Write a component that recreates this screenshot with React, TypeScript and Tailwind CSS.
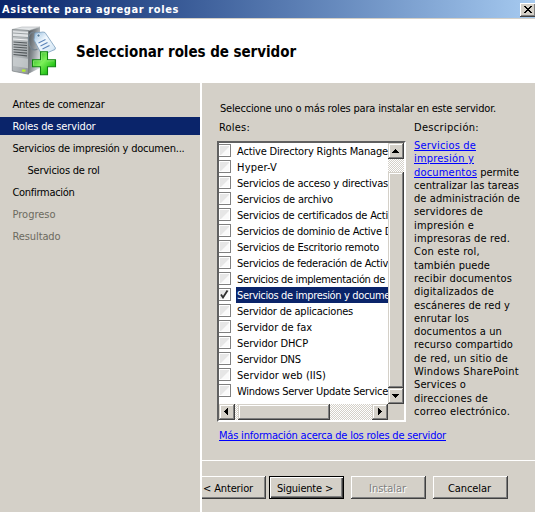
import { useLayoutEffect, useRef, useState } from 'react';

/* Single line of text tracked out to an exact width. */
function Fit({ text, w, className = '' }: { text: string; w: number; className?: string }) {
  const ref = useRef<HTMLSpanElement>(null);
  const [spacing, setSpacing] = useState(0);
  useLayoutEffect(() => {
    const el = ref.current;
    if (!el) return;
    el.style.letterSpacing = '0px';
    const s = (w - el.getBoundingClientRect().width) / text.length;
    el.style.letterSpacing = s + 'px';
    setSpacing(s);
  }, [text, w]);
  return (
    <span ref={ref} className={'inline-block shrink-0 translate-y-px whitespace-pre ' + className} style={{ letterSpacing: spacing }}>
      {text}
    </span>
  );
}

const steps = [
  { text: 'Antes de comenzar', w: 92 },
  { text: 'Roles de servidor', w: 83, active: true },
  { text: 'Servicios de impresión y documen...', w: 172 },
  { text: 'Servicios de rol', w: 72, indent: true },
  { text: 'Confirmación', w: 62 },
  { text: 'Progreso', w: 43, disabled: true },
  { text: 'Resultado', w: 48, disabled: true },
];

const roles = [
  { text: 'Active Directory Rights Manage', w: 151 },
  { text: 'Hyper-V', w: 40 },
  { text: 'Servicios de acceso y directivas', w: 151 },
  { text: 'Servicios de archivo', w: 96 },
  { text: 'Servicios de certificados de Acti', w: 151 },
  { text: 'Servicios de dominio de Active D', w: 155 },
  { text: 'Servicios de Escritorio remoto', w: 142 },
  { text: 'Servicios de federación de Activ', w: 151 },
  { text: 'Servicios de implementación de', w: 148 },
  { text: 'Servicios de impresión y docume', w: 153, checked: true },
  { text: 'Servidor de aplicaciones', w: 116 },
  { text: 'Servidor de fax', w: 75 },
  { text: 'Servidor DHCP', w: 71 },
  { text: 'Servidor DNS', w: 64 },
  { text: 'Servidor web (IIS)', w: 89 },
  { text: 'Windows Server Update Service', w: 151 },
];

const description = [
  { text: 'centralizar las tareas', w: 105 },
  { text: 'de administración de', w: 106 },
  { text: 'servidores de', w: 69 },
  { text: 'impresión e', w: 60 },
  { text: 'impresoras de red.', w: 96 },
  { text: 'Con este rol,', w: 66 },
  { text: 'también puede', w: 76 },
  { text: 'recibir documentos', w: 98 },
  { text: 'digitalizados de', w: 80 },
  { text: 'escáneres de red y', w: 96 },
  { text: 'enrutar los', w: 55 },
  { text: 'documentos a un', w: 88 },
  { text: 'recurso compartido', w: 99 },
  { text: 'de red, un sitio de', w: 94 },
  { text: 'Windows SharePoint', w: 105 },
  { text: 'Services o', w: 52 },
  { text: 'direcciones de', w: 74 },
  { text: 'correo electrónico.', w: 96 },
];

const raised =
  'bg-[#d4d0c8] shadow-[inset_-1px_-1px_#404040,inset_1px_1px_#d4d0c8,inset_-2px_-2px_#808080,inset_2px_2px_#fff]';
const dither = 'bg-[conic-gradient(#fff_25%,#d4d0c8_0_50%,#fff_0_75%,#d4d0c8_0)] bg-[length:2px_2px]';
const button =
  'flex h-[23px] shrink-0 items-center justify-center shadow-[inset_-1px_-1px_#404040,inset_1px_1px_#fff,inset_-2px_-2px_#808080]';

function Arrow({ d }: { d: string }) {
  return (
    <div className={'flex size-4 shrink-0 items-center justify-center ' + raised}>
      <svg className="size-4" viewBox="0 0 16 16" shapeRendering="crispEdges">
        <path d={d} fill="#000" />
      </svg>
    </div>
  );
}

function ServerIcon() {
  return (
    <svg className="h-[52px] w-[48px]" viewBox="0 0 48 52">
      <defs>
        <linearGradient id="front" x1="0" x2="1" y2="1">
          <stop stopColor="#c3c7ca" />
          <stop offset=".6" stopColor="#adb2b5" />
          <stop offset="1" stopColor="#8c9295" />
        </linearGradient>
        <linearGradient id="side" x1="0" x2="1" y2=".6">
          <stop stopColor="#4a4f52" />
          <stop offset=".5" stopColor="#858b8f" />
          <stop offset="1" stopColor="#d5d9dc" />
        </linearGradient>
        <linearGradient id="tag" x1="0" x2="1" y2="1">
          <stop stopColor="#8fb9dc" />
          <stop offset=".4" stopColor="#f1f8fe" />
          <stop offset=".8" stopColor="#dbeaf6" />
          <stop offset="1" stopColor="#9cc0de" />
        </linearGradient>
        <linearGradient id="plus" x1="0" x2="1" y2="1">
          <stop offset=".1" stopColor="#2eb422" />
          <stop offset=".45" stopColor="#7df05a" />
          <stop offset=".75" stopColor="#2bc81c" />
          <stop offset="1" stopColor="#139a10" />
        </linearGradient>
      </defs>
      <path d="M18 5 30 2v41l-12 6z" fill="url(#side)" />
      <path d="M2 4.500 12 2h18l-11 3.500z" fill="#e3e6e8" stroke="#aeb3b6" strokeWidth=".6" />
      <path d="M2.300 4.500 18.500 5.500v43.700L2.300 46z" fill="url(#front)" stroke="#777d80" strokeWidth=".7" />
      <path d="m3 6 15 1v6L3 12z" fill="#e1e4e6" />
      <path d="m3 8 15 1M3 11.500l15 1" stroke="#8a9093" strokeWidth=".8" />
      <path d="m3 14 15 1" stroke="#f3f4f5" strokeWidth="1" />
      <path
        d="m3.500 17 13.500 1M3.500 19.500l13.500 1M3.500 22l13.500 1M3.500 24.500l13.500 1M3.500 27l13.500 1.200M3.500 29.500l13.500 1.300"
        stroke="#53595c"
        strokeWidth="1.200"
      />
      <path d="m3 32 15 1.800v9.500L3 41z" fill="#d0d4d6" opacity=".65" />
      <path d="M12 44.500h3.500v2.200H12z" fill="#b6f02a" />
      <path d="M27 10c-4-6-9-1-8.500 5 .5 7 4 12 9 9" fill="none" stroke="#75838e" strokeWidth="1.300" />
      <path d="m25 8 8-1 2 .5 10.500 15.500-.5 1.500L33 29.500l-1.500-.5-7.500-14z" fill="url(#tag)" stroke="#7d9fbd" strokeWidth=".8" />
      <circle cx="28.500" cy="10.500" r="1.500" fill="#4e7798" stroke="#fff" strokeWidth=".6" />
      <path d="m28.500 18 7-3.500m-5 6.500 7-3.500m-5 6.500 7-3.500" stroke="#5f86bb" strokeWidth="1.200" />
      <path d="M30.500 26.700h7v8h8v7h-8v8h-7v-8h-8v-7h8z" fill="url(#plus)" stroke="#128312" strokeWidth="1.100" />
      <path d="M31.600 35.800v-8h4.800M23.600 40.500v-4.700h8M37 35.800h7.400" fill="none" stroke="#a6f58a" strokeWidth=".8" opacity=".7" />
    </svg>
  );
}

export default function App() {
  return (
    <div className="flex h-[512px] w-[535px] flex-col overflow-hidden bg-[#d4d0c8] font-['DejaVu_Sans_Condensed','DejaVu_Sans',sans-serif] text-[11px] leading-4 text-black">
      <header className="flex h-[18px] shrink-0 items-center justify-between bg-linear-to-r from-[#0a246a] to-[#a6caf0] pl-[2px] font-bold text-white">
        <Fit text="Asistente para agregar roles" w={177} />
        <div className="mt-px -mr-px flex h-[14px] w-4 items-center justify-center bg-[#d4d0c8] shadow-[inset_-1px_-1px_#404040,inset_1px_1px_#fff,inset_-2px_-2px_#808080]">
          <svg className="h-[14px] w-4" viewBox="0 0 16 14" shapeRendering="crispEdges">
            <path d="M4 3h2v1h1v1h2V4h1V3h2v1h-1v1h-1v1H9v1h1v1h1v1h1v1h-2V9H9V8H7v1H6v1H4V9h1V8h1V7h1V6H6V5H5V4H4z" />
          </svg>
        </div>
      </header>
      <div className="mt-px flex h-16 shrink-0 items-center bg-white pl-[10px]">
        <ServerIcon />
        <h1 className="ml-[18px] text-[15px] leading-5 font-bold">
          <Fit text="Seleccionar roles de servidor" w={220} />
        </h1>
      </div>
      <div className="flex min-h-0 grow">
        <nav className="flex w-[202px] shrink-0 flex-col gap-1 border-r-2 border-white pt-3">
          {steps.map((s) => (
            <div
              key={s.text}
              className={
                'flex h-[18px] items-center ' +
                (s.indent ? 'pl-[27.5px] ' : 'pl-[12.5px] ') +
                (s.active ? 'bg-[#0a246a] text-white' : s.disabled ? 'text-[#6c6a60]' : '')
              }
            >
              <Fit text={s.text} w={s.w} />
            </div>
          ))}
        </nav>
        <main className="flex grow flex-col">
          <div className="flex h-[377px] shrink-0 flex-col pt-[17px] pl-[15px]">
            <div className="flex h-4 pl-[3px]">
              <Fit text="Seleccione uno o más roles para instalar en este servidor." w={276} />
            </div>
            <div className="mt-[3px] flex">
              <section className="flex w-[197px] shrink-0 flex-col">
                <div className="flex h-[22px] pl-[2px]">
                  <Fit text="Roles:" w={31} />
                </div>
                <div className="flex h-[281px] w-[189px] flex-col border-2 border-t-[#606060] border-r-white border-b-white border-l-[#606060] bg-white">
                  <div className="flex h-[261px]">
                    <ul className="w-[169px] shrink-0 overflow-hidden">
                      {roles.map((r) => (
                        <li key={r.text} className="flex h-4 items-center">
                          <span className="mr-[5px] flex h-[13px] w-3 shrink-0 -translate-y-px items-center justify-center border border-l-0 border-[#808080] bg-white p-px">
                            <span className="flex size-full items-center justify-center bg-linear-to-br from-[#e6e6e6] from-50% to-[#fafafa] to-60%">
                              {r.checked && (
                                <svg className="size-[9px] shrink-0" viewBox="0 0 9 9">
                                  <path d="M1 4.500 3 7.500 7.500.5" fill="none" stroke="#303030" strokeWidth="1.800" />
                                </svg>
                              )}
                            </span>
                          </span>
                          <span className={'flex h-4 w-[152px] shrink-0 pl-px ' + (r.checked ? 'bg-[#0a246a] text-white' : '')}>
                            <Fit text={r.text} w={r.w} />
                          </span>
                        </li>
                      ))}
                    </ul>
                    <div className={'flex w-4 shrink-0 flex-col ' + dither}>
                      <Arrow d="M7 6h1v1h1v1h1v1h1v1H4V9h1V8h1V7h1z" />
                      <div className={'mt-[13px] grow ' + raised} />
                      <Arrow d="M4 6h7v1h-1v1H9v1H8v1H7V9H6V8H5V7H4z" />
                    </div>
                  </div>
                  <div className="flex h-4 bg-[#d4d0c8]">
                    <div className={'flex w-[169px] ' + dither}>
                      <Arrow d="M5 7h1V6h1V5h1V4h1v7H8v-1H7V9H6V8H5z" />
                      <div className={'ml-[3px] w-[92px] ' + raised} />
                      <div className="grow" />
                      <Arrow d="M6 4h1v1h1v1h1v1h1v1H9v1H8v1H7v1H6z" />
                    </div>
                  </div>
                </div>
                <a className="mt-[5px] flex h-4 pl-[2px] text-[#0000ff]">
                  <Fit text="Más información acerca de los roles de servidor" w={227} className="underline" />
                </a>
              </section>
              <section className="flex flex-col">
                <div className="flex h-[19px]">
                  <Fit text="Descripción:" w={65} />
                </div>
                <div className="flex flex-col leading-[13.3px]">
                  <Fit text="Servicios de" w={62} className="self-start text-[#0000ff] underline" />
                  <Fit text="impresión y" w={60} className="self-start text-[#0000ff] underline" />
                  <div className="flex">
                    <Fit text="documentos" w={63} className="text-[#0000ff] underline" />
                    <Fit text=" permite" w={42} />
                  </div>
                  {description.map((d) => (
                    <Fit key={d.text} text={d.text} w={d.w} className="self-start" />
                  ))}
                </div>
              </section>
            </div>
          </div>
          <footer className="flex border-t border-white pt-[15px]">
            <div className="flex h-[23px] w-16 shrink-0 items-center justify-center pr-[12px] shadow-[inset_-1px_-1px_#404040,inset_0_1px_#fff,inset_-2px_-2px_#808080]">
              <Fit text="< Anterior" w={50} />
            </div>
            <div className="ml-[3px] flex h-[23px] w-[75px] shrink-0 items-center justify-center border border-black pr-[3px] shadow-[inset_1px_1px_#fff,inset_-1px_-1px_#404040,inset_-2px_-2px_#808080]">
              <Fit text="Siguiente >" w={56} />
            </div>
            <div className={'ml-[7px] w-[75px] pr-[2px] text-[#808080] [text-shadow:1px_1px_#fff] ' + button}>
              <Fit text="Instalar" w={37} />
            </div>
            <div className={'ml-[7px] w-[75px] pr-[2px] ' + button}>
              <Fit text="Cancelar" w={43} />
            </div>
          </footer>
        </main>
      </div>
    </div>
  );
}
